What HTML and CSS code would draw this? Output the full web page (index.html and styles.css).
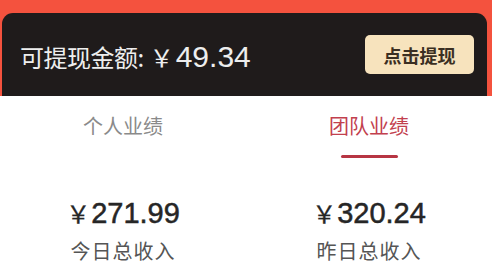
FILE: index.html
```
<!DOCTYPE html>
<html lang="zh-CN">
<head>
<meta charset="utf-8">
<link rel="stylesheet" href="styles.css">
</head>
<body>
<div class="page">
  <div class="card">
    <div class="balance"><span class="label">可提现金额:</span> <span class="yen">￥</span><span class="num">49.34</span></div>
    <div class="btn">点击提现</div>
  </div>
  <div class="panel">
    <div class="tabs">
      <div class="tab">个人业绩</div>
      <div class="tab active">团队业绩<span class="bar"></span></div>
    </div>
    <div class="stats">
      <div class="stat">
        <div class="amount"><span class="yen2">￥</span>271.99</div>
        <div class="desc">今日总收入</div>
      </div>
      <div class="stat">
        <div class="amount"><span class="yen2">￥</span>320.24</div>
        <div class="desc">昨日总收入</div>
      </div>
    </div>
  </div>
</div>
</body>
</html>
```
FILE: styles.css
```
* { box-sizing: border-box; margin: 0; padding: 0; }
html, body { width: 492px; height: 279px; overflow: hidden; }
body {
  background: #f4523e;
  font-family: "Liberation Sans", "Noto Sans CJK SC", sans-serif;
}
.page { display: flex; flex-direction: column; height: 279px; padding-top: 13px; }
.card {
  margin: 0 5px 0 2px;
  height: 83px;
  background: #1f1b1b;
  border-radius: 11px 11px 0 0;
  display: flex;
  align-items: center;
  justify-content: space-between;
  padding: 0 13px 0 18px;
}
.balance { color: #eeeeee; display: flex; align-items: center; padding-top: 5px; }
.label { font-family: "Noto Sans CJK SC", sans-serif; font-size: 24px; line-height: 30px; letter-spacing: -0.5px; }
.yen { font-family: "Noto Sans CJK SC", sans-serif; font-size: 24px; line-height: 30px; margin-left: 6px; }
.num { font-size: 30px; line-height: 30px; margin-left: 2px; }
.btn {
  width: 109px;
  height: 39px;
  background: #f7e3bd;
  border-radius: 5px;
  color: #3b2f22;
  font-family: "Noto Sans CJK SC", sans-serif;
  font-weight: 700;
  font-size: 18px;
  display: flex;
  align-items: center;
  justify-content: center;
}
.panel { flex: 1; background: #ffffff; }
.tabs { display: grid; grid-template-columns: 1fr 1fr; }
.tab {
  display: flex;
  flex-direction: column;
  align-items: center;
  padding-top: 18px;
  font-family: "Noto Sans CJK SC", sans-serif;
  font-size: 20px;
  line-height: 24px;
  color: #8a8a8a;
}
.tab.active { color: #c2404e; }
.bar { display: block; width: 57px; height: 3px; background: #b73543; margin-top: 17px; border-radius: 2px; }
.stats { display: grid; grid-template-columns: 1fr 1fr; margin-top: 39px; }
.stat { display: flex; flex-direction: column; align-items: center; }
.amount { font-size: 29px; line-height: 32px; color: #262626; display: flex; align-items: center; -webkit-text-stroke: 0.5px #262626; }
.yen2 { font-family: "Noto Sans CJK SC", sans-serif; font-size: 24px; margin-right: 1px; -webkit-text-stroke: 0.3px #262626; }
.desc { font-family: "Noto Sans CJK SC", sans-serif; font-size: 20px; line-height: 24px; color: #555555; margin-top: 10px; letter-spacing: 1px; }
```
